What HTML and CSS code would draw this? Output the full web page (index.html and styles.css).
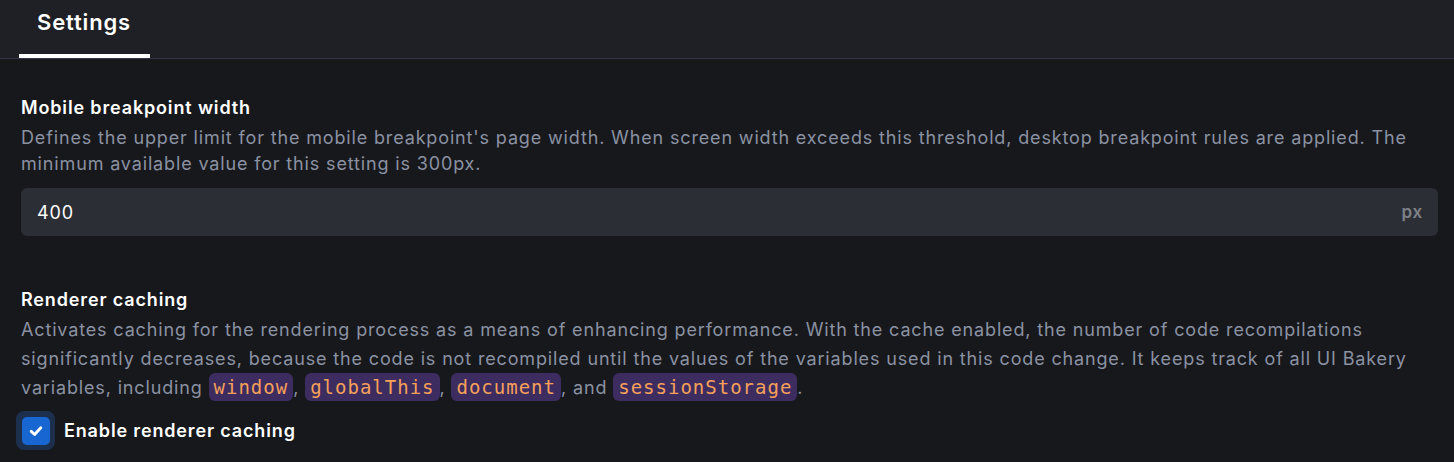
FILE: index.html
```html
<!DOCTYPE html>
<html>
<head>
<meta charset="utf-8">
<link rel="stylesheet" href="styles.css">
</head>
<body>
<header class="tabs">
  <div class="tab active">Settings</div>
</header>
<main class="content">
  <section class="setting">
    <h3 class="setting-title">Mobile breakpoint width</h3>
    <p class="setting-desc">Defines the upper limit for the mobile breakpoint's page width. When screen width exceeds this threshold, desktop breakpoint rules are applied. The minimum available value for this setting is 300px.</p>
    <div class="input">
      <span class="input-value">400</span>
      <span class="input-suffix">px</span>
    </div>
  </section>
  <section class="setting second">
    <h3 class="setting-title">Renderer caching</h3>
    <p class="setting-desc rich">Activates caching for the rendering process as a means of enhancing performance. With the cache enabled, the number of code recompilations significantly decreases, because the code is not recompiled until the values of the variables used in this code change. It keeps track of all UI Bakery variables, including <code>window</code>, <code>globalThis</code>, <code>document</code>, and <code>sessionStorage</code>.</p>
    <label class="checkbox">
      <span class="box-ring"><span class="box">
        <svg width="16" height="16" viewBox="0 0 14 14"><path d="M2.8 7.3 L5.8 10.1 L11.2 4.2" fill="none" stroke="#fff" stroke-width="2.5" stroke-linecap="round" stroke-linejoin="round"/></svg>
      </span></span>
      <span class="checkbox-label">Enable renderer caching</span>
    </label>
  </section>
</main>
</body>
</html>
```
FILE: styles.css
```css
* { box-sizing: border-box; }
html, body { margin: 0; padding: 0; }
body {
  background: #17181c;
  font-family: Inter, "Noto Sans", sans-serif;
  color: #ffffff;
  width: 1454px;
  height: 462px;
  overflow: hidden;
  letter-spacing: 0.85px;
}
.tabs {
  height: 59px;
  background: #1f2025;
  border-bottom: 1px solid #34354a;
  display: flex;
  padding-left: 19px;
  align-items: flex-end;
}
.tab {
  width: 131px;
  height: 58px;
  padding: 7px 0 0 18px;
  font-size: 22px;
  font-weight: 600;
  line-height: 30px;
  border-bottom: 4px solid #ffffff;
  color: #ffffff;
}
.content {
  padding: 34px 16px 0 21px;
}
.setting-title {
  margin: 0;
  font-size: 18px;
  font-weight: 600;
  line-height: 30px;
  color: #ffffff;
}
.setting-desc {
  margin: 2px 0 0;
  font-size: 18px;
  line-height: 26px;
  color: #8b92a2;
}
.setting-desc.rich {
  margin-top: 0;
  line-height: 29px;
}
.input {
  margin-top: 11px;
  height: 48px;
  background: #2c2e35;
  border-radius: 6px;
  display: flex;
  align-items: center;
  justify-content: space-between;
  padding: 0 15px 0 16px;
}
.input-value {
  font-size: 18px;
  color: #ffffff;
}
.input-suffix {
  font-size: 17px;
  font-weight: 600;
  color: #7e8188;
}
.second {
  margin-top: 49px;
}
code {
  font-family: "DejaVu Sans Mono", monospace;
  font-size: 19px;
  letter-spacing: 1px;
  background: #3c2c60;
  color: #f6a05a;
  border-radius: 6px;
  padding: 3px 5px;
}
.checkbox {
  display: flex;
  align-items: center;
  gap: 9px;
  margin-top: 9px;
  margin-left: -5px;
}
.box-ring {
  width: 39px;
  height: 39px;
  border-radius: 8px;
  background: #1c2f4c;
  display: flex;
  align-items: center;
  justify-content: center;
}
.box {
  width: 28px;
  height: 28px;
  border-radius: 5px;
  background: #1866d1;
  display: flex;
  align-items: center;
  justify-content: center;
}
.checkbox-label {
  font-size: 18px;
  font-weight: 600;
  color: #ffffff;
}
```
